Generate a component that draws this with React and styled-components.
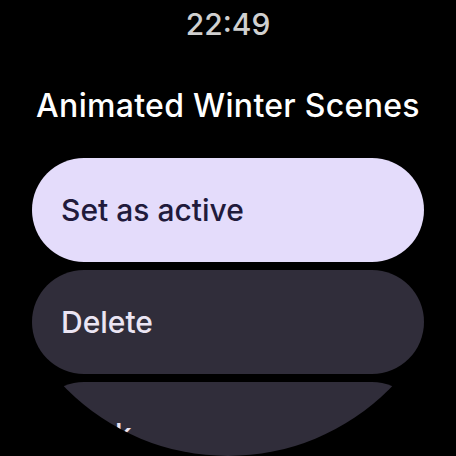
import React from "react"
import styled, { createGlobalStyle } from "styled-components"

const GlobalStyle = createGlobalStyle`
  html, body {
    margin: 0;
    padding: 0;
    background: #000;
  }
  body {
    font-family: Inter, Roboto, "Liberation Sans", sans-serif;
  }
`

const Screen = styled.div`
  width: 456px;
  height: 456px;
  border-radius: 50%;
  overflow: hidden;
  background: #000;
  display: flex;
  flex-direction: column;
  align-items: center;
`

const Time = styled.div`
  margin-top: 6px;
  font-size: 30px;
  line-height: 36px;
  font-weight: 500;
  color: #d0d0d0;
`

const Title = styled.h1`
  margin: 45px 0 0;
  font-size: 32px;
  line-height: 38px;
  font-weight: 500;
  letter-spacing: 0.3px;
  white-space: nowrap;
  color: #ffffff;
`

const List = styled.div`
  margin-top: 33px;
  width: 392px;
  display: flex;
  flex-direction: column;
  gap: 8px;
`

const Chip = styled.div`
  height: 104px;
  border-radius: 52px;
  flex-shrink: 0;
  display: flex;
  align-items: center;
  padding: 0 29px;
  font-size: 30px;
  font-weight: 500;
  background: ${({ $primary }) => ($primary ? "#e4dcfb" : "#302d3a")};
  color: ${({ $primary }) => ($primary ? "#211a3b" : "#ebe5f3")};
`

export default function App() {
  return (
    <>
      <GlobalStyle />
      <Screen>
        <Time>22:49</Time>
        <Title>Animated Winter Scenes</Title>
        <List>
          <Chip $primary>Set as active</Chip>
          <Chip>Delete</Chip>
          <Chip>Back</Chip>
        </List>
      </Screen>
    </>
  )
}
